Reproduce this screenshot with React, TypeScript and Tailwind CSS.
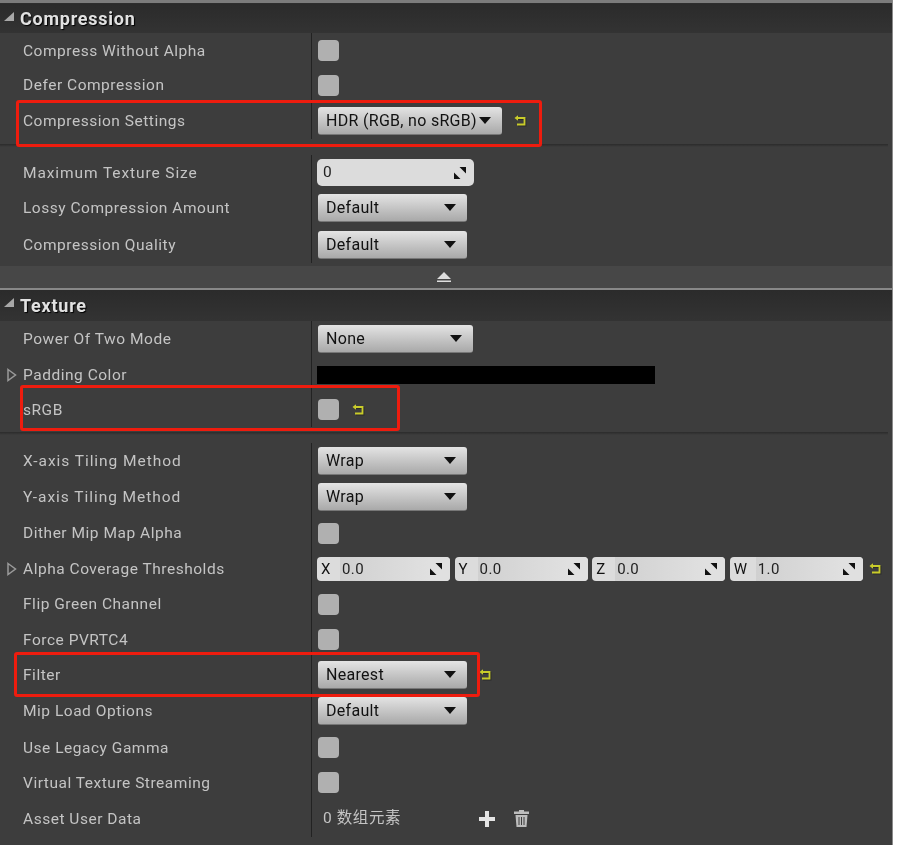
const font = "font-['Roboto',sans-serif]"

const ResizeIcon = () => (
  <svg width="14" height="14" viewBox="0 0 14 14" className="shrink-0">
    <path d="M6.5 1h6.5v6.5z M1 6.5 7.5 13H1z" fill="#111" />
  </svg>
)

const ResetIcon = () => (
  <svg width="13" height="12" viewBox="0 0 13 12" className="shrink-0">
    <path d="M4 4h7.5v6.5H4" fill="none" stroke="#1e1e1e" strokeWidth="1.8" opacity=".6" />
    <path d="M3 3h7.5v6.5H3" fill="none" stroke="#c9cc2a" strokeWidth="1.8" />
    <path d="M0.5 3 4 0.3v5.4z" fill="#c9cc2a" />
  </svg>
)

const Checkbox = () => <div className="w-[21px] h-[21px] rounded-[4px] bg-[#b0b0b0]" />

const Dropdown = ({ label, width = "w-[149px]" }: { label: string; width?: string }) => (
  <div className={`${width} h-[28px] flex items-center justify-between pl-2 pr-[11px] rounded-[3px] bg-gradient-to-b from-[#e4e4e4] to-[#a9a9a9] border-b border-[#777] text-[#111] text-[16px] tracking-[0.3px]`}>
    <span className="whitespace-nowrap pt-px">{label}</span>
    <svg width="12" height="7" viewBox="0 0 12 7" className="shrink-0"><path d="M0 0h12L6 7z" fill="#111" /></svg>
  </div>
)

const VectorField = ({ axis, value, labelWidth = "w-[23px]" }: { axis: string; value: string; labelWidth?: string }) => (
  <div className="w-[133px] h-[24px] flex items-center rounded-[4px] bg-[#dcdcdc] text-[#222] text-[15px] tracking-[0.4px]">
    <span className={`${labelWidth} pl-[4px] pt-px text-[#111]`}>{axis}</span>
    <span className="flex-1 h-full flex items-center pl-[2px] pt-px bg-gradient-to-r from-[#d0d0d0] to-[#e0e0e0]">{value}</span>
    <div className="pr-[7px] h-full flex items-center bg-[#e0e0e0] rounded-r-[4px]"><ResizeIcon /></div>
  </div>
)

interface RowProps {
  label: string
  height: string
  arrow?: boolean
  tracking?: string
  children?: React.ReactNode
}

const Row = ({ label, height, arrow, tracking = "tracking-[0.52px]", children }: RowProps) => (
  <div className={`flex ${height}`}>
    <div className={`w-[311px] shrink-0 relative flex items-center pl-[23px] pt-[2px] text-[#c4c4c4] text-[15.5px] ${tracking} whitespace-nowrap`}>
      {arrow && (
        <svg width="10" height="14" viewBox="0 0 10 14" className="absolute left-[7px] top-1/2 -translate-y-1/2">
          <path d="M1 1.5 8.5 7 1 12.5z" fill="none" stroke="#9a9a9a" strokeWidth="1.5" />
        </svg>
      )}
      {label}
    </div>
    <div className="flex-1 flex items-center border-l border-[#222] pl-[6px]">{children}</div>
  </div>
)

const Header = ({ title, height }: { title: string; height: string }) => (
  <div className={`${height} flex items-center bg-gradient-to-b from-[#2b2b2b] to-[#333] relative pl-[20px] text-[#e2e2e2] text-[18px] font-bold tracking-[0.75px]`}>
    <svg width="11" height="10" viewBox="0 0 11 10" className="absolute left-[4px] top-[8px]"><path d="M10 0v9H0z" fill="#a8a8a8" /></svg>
    <span className="[text-shadow:1px_1px_1px_#000]">{title}</span>
  </div>
)

const Separator = () => (
  <div className="h-[16px] pt-[5px] pr-[4px]">
    <div className="h-[3px] bg-gradient-to-b from-[#2b2b2b] to-[#3d3d3d]" />
  </div>
)

const App = () => {
  return (
    <div className={`relative w-[900px] h-[845px] bg-white overflow-hidden ${font} [filter:blur(0.35px)]`}>
      <div className="w-[893px] h-full bg-[#3d3d3d] border-r border-[#8a8a8a]">
        <div className="h-[4px] bg-[#2e2e2e] border-t-[3px] border-[#7c7c7c]" />
        <Header title="Compression" height="h-[29px]" />
        <Row label="Compress Without Alpha" height="h-[35px]"><Checkbox /></Row>
        <Row label="Defer Compression" height="h-[34px]"><Checkbox /></Row>
        <Row label="Compression Settings" height="h-[37px]">
          <Dropdown label="HDR (RGB, no sRGB)" width="w-[184px]" />
          <div className="ml-[12px]"><ResetIcon /></div>
        </Row>
        <Separator />
        <Row label="Maximum Texture Size" height="h-[35px]" tracking="tracking-[0.9px]">
          <div className="-ml-px w-[157px] h-[27px] flex items-center justify-between pl-[6px] pr-[7px] rounded-[5px] bg-[#dcdcdc] text-[#222] text-[15.5px]">
            <span className="pt-px">0</span>
            <ResizeIcon />
          </div>
        </Row>
        <Row label="Lossy Compression Amount" height="h-[36px]"><Dropdown label="Default" /></Row>
        <Row label="Compression Quality" height="h-[37px]"><Dropdown label="Default" /></Row>
        <div className="h-[3px]" />
        <div className="h-[22px] flex items-center justify-center bg-[#474747]">
          <svg width="16" height="11" viewBox="0 0 16 11" className="ml-[-4px]"><path d="M8 0l7 7H1z M1 8.5h14V10H1z" fill="#dedede" /></svg>
        </div>
        <div className="h-[2px] bg-[#888]" />
        <Header title="Texture" height="h-[31px]" />
        <Row label="Power Of Two Mode" height="h-[36px]"><Dropdown label="None" width="w-[155px]" /></Row>
        <Row label="Padding Color" height="h-[35px]" arrow>
          <div className="-ml-px w-[338px] h-[18px] bg-black" />
        </Row>
        <Row label="sRGB" height="h-[35px]">
          <Checkbox />
          <div className="ml-[13px]"><ResetIcon /></div>
        </Row>
        <Separator />
        <Row label="X-axis Tiling Method" height="h-[36px]" tracking="tracking-[0.95px]"><Dropdown label="Wrap" /></Row>
        <Row label="Y-axis Tiling Method" height="h-[36px]" tracking="tracking-[0.95px]"><Dropdown label="Wrap" /></Row>
        <Row label="Dither Mip Map Alpha" height="h-[36px]"><Checkbox /></Row>
        <Row label="Alpha Coverage Thresholds" height="h-[35px]" arrow>
          <div className="-ml-px flex items-center gap-[4.6px]">
            <VectorField axis="X" value="0.0" />
            <VectorField axis="Y" value="0.0" />
            <VectorField axis="Z" value="0.0" />
            <VectorField axis="W" value="1.0" labelWidth="w-[26px]" />
          </div>
          <div className="ml-[6px]"><ResetIcon /></div>
        </Row>
        <Row label="Flip Green Channel" height="h-[36px]"><Checkbox /></Row>
        <Row label="Force PVRTC4" height="h-[35px]"><Checkbox /></Row>
        <Row label="Filter" height="h-[35px]">
          <Dropdown label="Nearest" />
          <div className="ml-[12px]"><ResetIcon /></div>
        </Row>
        <Row label="Mip Load Options" height="h-[38px]"><Dropdown label="Default" /></Row>
        <Row label="Use Legacy Gamma" height="h-[35px]"><Checkbox /></Row>
        <Row label="Virtual Texture Streaming" height="h-[35px]"><Checkbox /></Row>
        <Row label="Asset User Data" height="h-[37px]">
          <span className="ml-[5px] pt-px text-[#c4c4c4] text-[15.5px] tracking-[0.6px] font-['Roboto','Noto_Sans_CJK_SC',sans-serif]">0 数组元素</span>
          <svg width="16" height="16" viewBox="0 0 16 16" className="ml-[78px]"><path d="M6 0h4v6h6v4h-6v6H6v-6H0V6h6z" fill="#e4e4e4" /></svg>
          <svg width="15" height="17" viewBox="0 0 15 17" className="ml-[19px]">
            <path d="M5 0h5v1.5h5V4H0V1.5h5z M1.5 5h12l-1 12h-10z" fill="#bdbdbd" />
            <path d="M5 7v8M7.5 7v8M10 7v8" stroke="#3d3d3d" strokeWidth="1" />
          </svg>
        </Row>
      </div>
      <div className="absolute left-[16px] top-[100px] w-[526px] h-[47px] border-[3px] border-[#ee1c0e] rounded-[3px]" />
      <div className="absolute left-[20px] top-[385px] w-[380px] h-[46px] border-[3px] border-[#ee1c0e] rounded-[3px]" />
      <div className="absolute left-[14px] top-[652px] w-[466px] h-[45px] border-[3px] border-[#ee1c0e] rounded-[3px]" />
    </div>
  )
}

export default App
